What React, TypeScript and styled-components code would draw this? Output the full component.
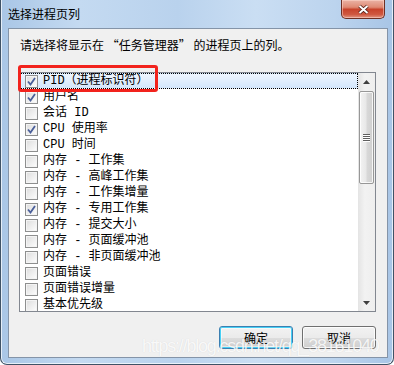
import styled, { createGlobalStyle } from 'styled-components';

const GlobalStyle = createGlobalStyle`
  html, body {
    margin: 0;
    padding: 0;
    background: #ffffff;
  }
  body {
    font-family: "Noto Sans CJK SC", sans-serif;
  }
`;

const Window = styled.div`
  position: relative;
  box-sizing: border-box;
  width: 394px;
  height: 365px;
  display: flex;
  flex-direction: column;
  padding: 0 5px 6px 7px;
  border: 1px solid #3f5266;
  border-top: none;
  border-radius: 0 0 7px 7px;
  background: linear-gradient(
    90deg,
    #a9c6e6 0%,
    #c4daf1 20%,
    #b9d2ed 45%,
    #cadef3 65%,
    #bcd4ee 85%,
    #a8c5e6 100%
  );
  box-shadow: inset 1px 0 0 rgba(255, 255, 255, 0.7),
    inset -1px 0 0 rgba(255, 255, 255, 0.7),
    inset 0 -1px 0 rgba(255, 255, 255, 0.7);
`;

const TitleBar = styled.div`
  height: 28px;
  display: flex;
  align-items: flex-start;
`;

const Title = styled.div`
  padding-top: 6px;
  font-size: 12px;
  line-height: 16px;
  color: #000;
`;

const CloseButton = styled.div`
  box-sizing: border-box;
  width: 44px;
  height: 19px;
  margin-left: auto;
  margin-right: 3px;
  display: flex;
  align-items: center;
  justify-content: center;
  border: 1px solid #6e3024;
  border-top: none;
  border-radius: 0 0 5px 5px;
  background: linear-gradient(
    to bottom,
    #eab3a5 0%,
    #df8a74 40%,
    #c8432b 52%,
    #cf5840 80%,
    #e29682 100%
  );
  box-shadow: inset 0 0 0 1px rgba(255, 220, 210, 0.5);
`;

const Client = styled.div`
  flex: 1;
  box-sizing: border-box;
  display: flex;
  flex-direction: column;
  padding: 8px 11px 8px 10px;
  border: 1px solid #8494a8;
  background: #f0f0f0;
`;

const Prompt = styled.div`
  margin-left: 1px;
  font-size: 12px;
  line-height: 16px;
  color: #000;
  white-space: nowrap;
`;

const ListBox = styled.div`
  box-sizing: border-box;
  height: 240px;
  margin-top: 19px;
  display: flex;
  border: 1px solid #828790;
  background: #ffffff;
  overflow: hidden;
`;

const Items = styled.div`
  flex: 1;
  display: flex;
  flex-direction: column;
`;

const Row = styled.div<{ $selected?: boolean }>`
  box-sizing: border-box;
  height: 16px;
  flex: none;
  display: flex;
  align-items: center;
  gap: 5px;
  padding-left: ${(p) => (p.$selected ? 4 : 5)}px;
  border: ${(p) => (p.$selected ? '1px dotted #000' : 'none')};
  background: ${(p) =>
    p.$selected ? 'linear-gradient(to bottom, #eef5fe, #d3e6fc)' : 'transparent'};
`;

const Box = styled.div`
  box-sizing: border-box;
  width: 13px;
  height: 13px;
  flex: none;
  border: 1px solid #8e8f8f;
  background: linear-gradient(135deg, #dcdcdc, #f4f4f4 70%, #ffffff);
  box-shadow: inset 0 0 0 1px #f4f4f4;
  display: flex;
  align-items: center;
  justify-content: center;
`;

const ItemText = styled.span`
  font-family: "Liberation Mono", "Noto Sans CJK SC", monospace;
  font-size: 12px;
  line-height: 16px;
  color: #000;
  white-space: pre;
`;

const ScrollBar = styled.div`
  width: 17px;
  flex: none;
  display: flex;
  flex-direction: column;
  background: linear-gradient(90deg, #e4e4e4, #f2f2f2 40%, #eeeeee);
`;

const ArrowButton = styled.div`
  height: 17px;
  flex: none;
  display: flex;
  align-items: center;
  justify-content: center;
`;

const Thumb = styled.div`
  box-sizing: border-box;
  height: 93px;
  margin: 1px 1px 0 1px;
  border: 1px solid #979797;
  border-radius: 2px;
  background: linear-gradient(90deg, #f3f3f3, #e8e8e8 45%, #d8d8d8 55%, #cfcfcf);
  box-shadow: inset 0 0 0 1px rgba(255, 255, 255, 0.8);
  display: flex;
  flex-direction: column;
  align-items: center;
  justify-content: center;
  gap: 1px;
`;

const Grip = styled.div`
  width: 7px;
  height: 1px;
  background: #5f5f5f;
  box-shadow: 0 1px 0 #ffffff;
`;

const Track = styled.div`
  flex: 1;
`;

const ButtonRow = styled.div`
  margin-top: 14px;
  display: flex;
  justify-content: flex-end;
  gap: 9px;
`;

const Button = styled.button<{ $default?: boolean }>`
  box-sizing: border-box;
  width: 74px;
  height: 23px;
  padding: 0;
  font-family: "Noto Sans CJK SC", sans-serif;
  font-size: 12px;
  color: #000;
  border: 1px solid ${(p) => (p.$default ? '#3c7fb1' : '#707070')};
  border-radius: 3px;
  background: linear-gradient(to bottom, #f2f2f2 0%, #ebebeb 50%, #dddddd 51%, #cfcfcf 100%);
  box-shadow: ${(p) =>
    p.$default
      ? 'inset 0 0 0 1px #48d0f5, inset 0 0 0 2px rgba(255,255,255,0.5)'
      : 'inset 0 0 0 1px rgba(255,255,255,0.8)'};
`;

const RedMark = styled.div`
  position: absolute;
  left: 17px;
  top: 65px;
  width: 140px;
  height: 27px;
  box-sizing: border-box;
  border: 3px solid #f2231d;
  border-radius: 3px;
  pointer-events: none;
`;

const Watermark = styled.div`
  position: absolute;
  left: 141px;
  top: 335px;
  font-family: "Liberation Sans", sans-serif;
  font-size: 18px;
  letter-spacing: -1.2px;
  line-height: 22px;
  color: rgba(255, 255, 255, 0.85);
  text-shadow: 0 0 1px rgba(0, 0, 0, 0.12);
  white-space: nowrap;
  pointer-events: none;
`;

const columns: { label: string; checked: boolean }[] = [
  { label: 'PID（进程标识符）', checked: true },
  { label: '用户名', checked: true },
  { label: '会话 ID', checked: false },
  { label: 'CPU 使用率', checked: true },
  { label: 'CPU 时间', checked: false },
  { label: '内存 - 工作集', checked: false },
  { label: '内存 - 高峰工作集', checked: false },
  { label: '内存 - 工作集增量', checked: false },
  { label: '内存 - 专用工作集', checked: true },
  { label: '内存 - 提交大小', checked: false },
  { label: '内存 - 页面缓冲池', checked: false },
  { label: '内存 - 非页面缓冲池', checked: false },
  { label: '页面错误', checked: false },
  { label: '页面错误增量', checked: false },
  { label: '基本优先级', checked: false },
];

function Check() {
  return (
    <svg width="9" height="9" viewBox="0 0 9 9">
      <path d="M1 4.5 L3.5 7.5 L8 1" fill="none" stroke="#4a5f9a" strokeWidth="1.8" />
    </svg>
  );
}

function App() {
  return (
    <>
      <GlobalStyle />
      <Window>
        <TitleBar>
          <Title>选择进程页列</Title>
          <CloseButton>
            <svg width="13" height="11" viewBox="0 0 13 11">
              <path d="M2.5 2 L10.5 9 M10.5 2 L2.5 9" stroke="#4a1a12" strokeWidth="3.6" />
              <path d="M2.5 2 L10.5 9 M10.5 2 L2.5 9" stroke="#ffffff" strokeWidth="2" />
            </svg>
          </CloseButton>
        </TitleBar>
        <Client>
          <Prompt>请选择将显示在 “任务管理器” 的进程页上的列。</Prompt>
          <ListBox>
            <Items>
              {columns.map((c, i) => (
                <Row key={c.label} $selected={i === 0}>
                  <Box>{c.checked && <Check />}</Box>
                  <ItemText>{c.label}</ItemText>
                </Row>
              ))}
            </Items>
            <ScrollBar>
              <ArrowButton>
                <svg width="7" height="4" viewBox="0 0 7 4">
                  <path d="M0 4 L3.5 0 L7 4 Z" fill="#404040" />
                </svg>
              </ArrowButton>
              <Thumb>
                <Grip />
                <Grip />
                <Grip />
                <Grip />
              </Thumb>
              <Track />
              <ArrowButton>
                <svg width="7" height="4" viewBox="0 0 7 4">
                  <path d="M0 0 L7 0 L3.5 4 Z" fill="#404040" />
                </svg>
              </ArrowButton>
            </ScrollBar>
          </ListBox>
          <ButtonRow>
            <Button $default>确定</Button>
            <Button>取消</Button>
          </ButtonRow>
        </Client>
        <RedMark />
        <Watermark>https://blog.csdn.net/qq_38161040</Watermark>
      </Window>
    </>
  );
}

export default App;
